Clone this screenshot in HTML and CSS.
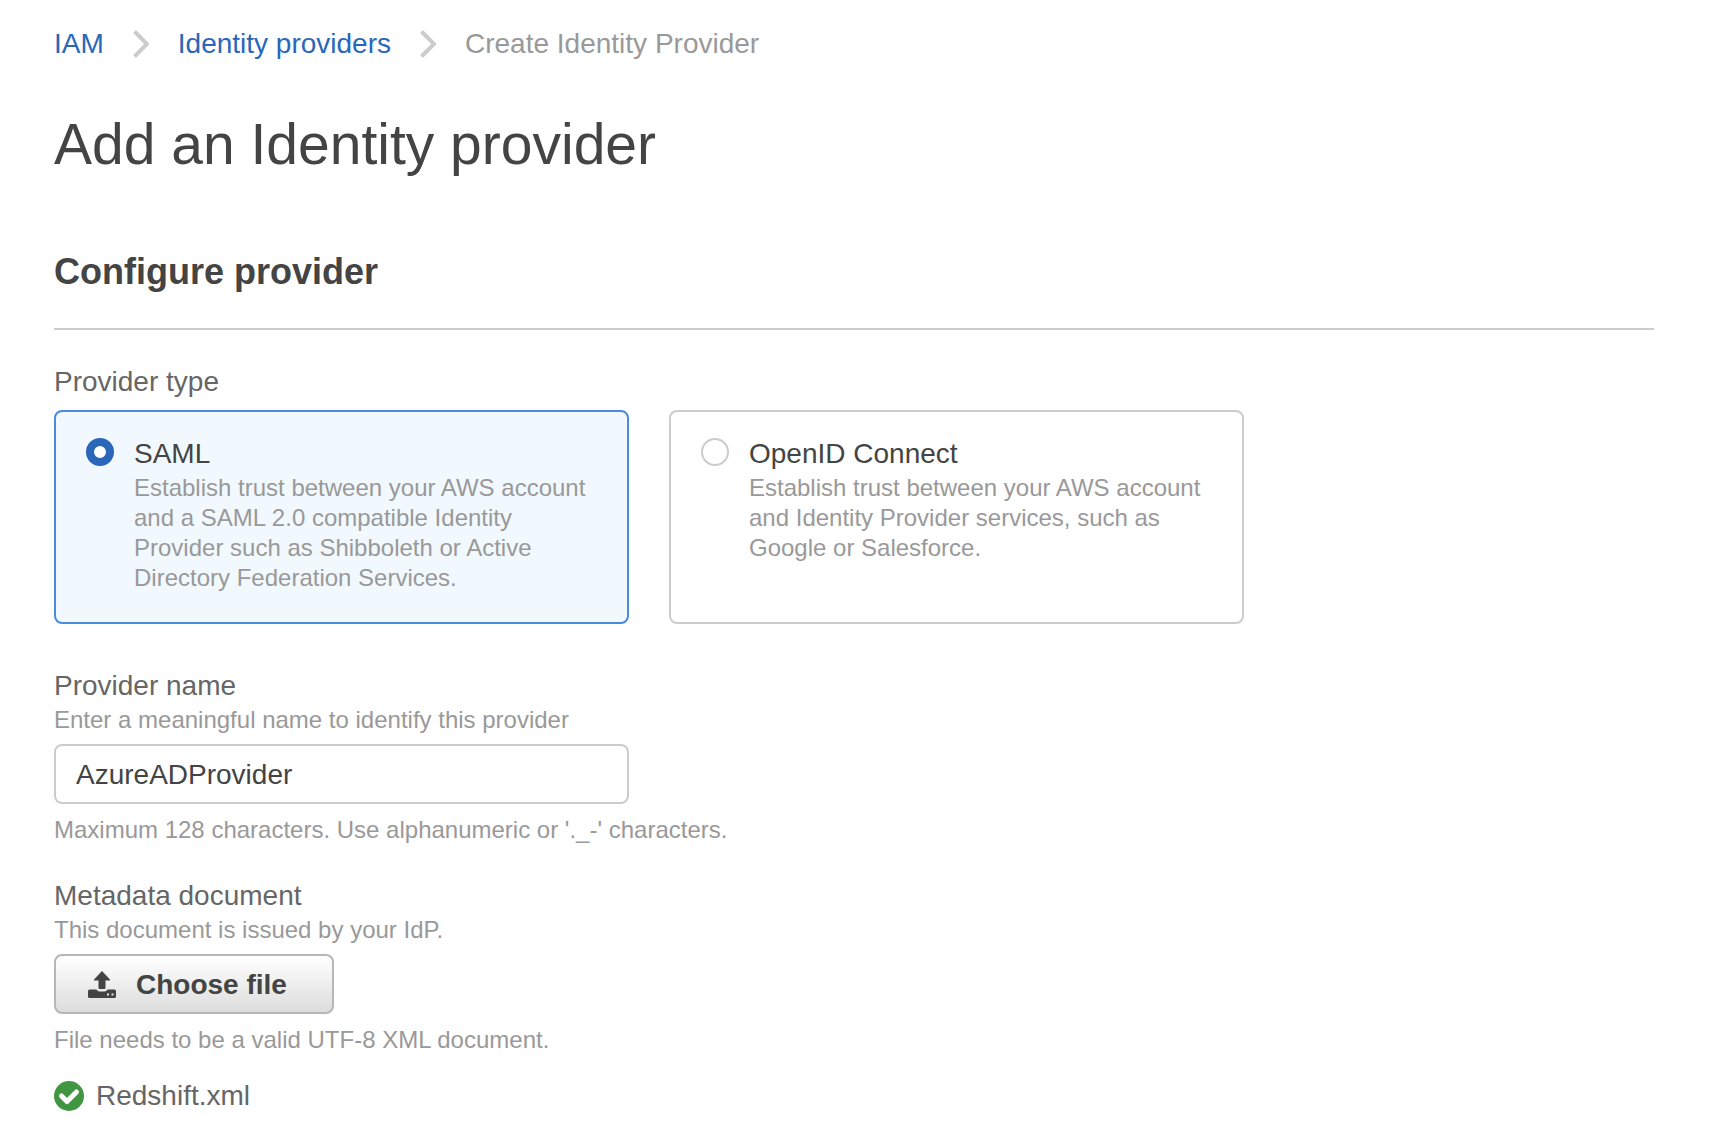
FILE: index.html
```html
<!DOCTYPE html>
<html lang="en">
<head>
  <meta charset="UTF-8" />
  <meta name="viewport" content="width=device-width, initial-scale=1.0"/>
  <title>Create Identity Provider - IAM</title>
  <link rel="stylesheet" href="styles.css">
</head>
<body>
  <nav class="breadcrumb" aria-label="Breadcrumb">
    <a href="#">IAM</a>
    <svg class="chevron" viewBox="0 0 16 28" aria-hidden="true"><path d="M1.5 1.5 14 14 1.5 26.5"/></svg>
    <a href="#">Identity providers</a>
    <svg class="chevron" viewBox="0 0 16 28" aria-hidden="true"><path d="M1.5 1.5 14 14 1.5 26.5"/></svg>
    <span>Create Identity Provider</span>
  </nav>

  <main>
    <h1>Add an Identity provider</h1>
    <h2>Configure provider</h2>

    <form>
      <fieldset class="field">
        <legend class="label">Provider type</legend>
        <div class="cards">
          <label class="card selected">
            <input type="radio" name="type" value="saml" checked />
            <span class="card-text">
              <span class="card-title">SAML</span>
              <span class="hint">Establish trust between your AWS account and a SAML 2.0 compatible Identity Provider such as Shibboleth or Active Directory Federation Services.</span>
            </span>
          </label>
          <label class="card">
            <input type="radio" name="type" value="oidc" />
            <span class="card-text">
              <span class="card-title">OpenID Connect</span>
              <span class="hint">Establish trust between your AWS account and Identity Provider services, such as Google or Salesforce.</span>
            </span>
          </label>
        </div>
      </fieldset>

      <div class="field">
        <label class="label" for="provider-name">Provider name</label>
        <div class="hint">Enter a meaningful name to identify this provider</div>
        <input type="text" class="text-input" id="provider-name" value="AzureADProvider" maxlength="128" spellcheck="false" />
        <div class="hint">Maximum 128 characters. Use alphanumeric or '._-' characters.</div>
      </div>

      <div class="field">
        <label class="label" for="choose-file">Metadata document</label>
        <div class="hint">This document is issued by your IdP.</div>
        <button type="button" class="file-button" id="choose-file">
          <svg class="upload-icon" viewBox="0 0 28 28" aria-hidden="true">
            <path d="M14 0 22 8.500Q22.700 9.500 21.500 9.500H17.500V17Q17.500 18 16.500 18H11.500Q10.500 18 10.500 17V9.500H6.500Q5.300 9.500 6 8.500Z"/>
            <path fill-rule="evenodd" d="M1.500 18.500H8.500Q9.500 20.500 11.500 20.500H16.500Q18.500 20.500 19.500 18.500H26.500Q28 18.500 28 20V25.500Q28 27 26.500 27H1.500Q0 27 0 25.500V20Q0 18.500 1.500 18.500ZM19 22.500V24.500H21V22.500ZM23.500 22.500V24.500H25.500V22.500Z"/>
          </svg>
          Choose file
        </button>
        <div class="hint">File needs to be a valid UTF-8 XML document.</div>
        <div class="file">
          <svg class="check-icon" viewBox="0 0 30 30" aria-hidden="true"><circle cx="15" cy="15" r="15"/><path d="M7.500 15 13 20.500 22.500 11"/></svg>
          <span>Redshift.xml</span>
        </div>
      </div>
    </form>
  </main>
</body>
</html>
```
FILE: styles.css
```css
* {
  box-sizing: border-box;
}
body {
  font-family: "Helvetica Neue", "Liberation Sans", Arial, sans-serif;
  font-size: 28px;
  line-height: 38px;
  background: #fff;
  color: #444;
  margin: 0;
  padding: 25px 82px 24px 54px;
}
.breadcrumb {
  display: flex;
  align-items: center;
  gap: 29px;
  color: #999;
}
.breadcrumb a {
  color: #2a67b9;
  text-decoration: none;
}
.chevron {
  width: 16px;
  height: 28px;
  fill: none;
  stroke: #ccc;
  stroke-width: 4;
}
h1 {
  font-size: 57px;
  line-height: 64px;
  font-weight: normal;
  margin: 49px 0 72px;
}
h2 {
  font-size: 36px;
  line-height: 48px;
  margin: 0 0 33px;
  padding-bottom: 32px;
  border-bottom: 2px solid #ccc;
}
.field {
  border: none;
  margin: 0 0 32px;
  padding: 0;
}
fieldset.field {
  margin-bottom: 43px;
}
.label {
  display: block;
  padding: 0;
  color: #666;
}
.hint {
  display: block;
  font-size: 24px;
  line-height: 30px;
  color: #999;
}

/* provider type cards */
.cards {
  display: grid;
  grid-template-columns: 1fr 1fr;
  gap: 40px;
  max-width: 1190px;
  margin-top: 9px;
}
.card {
  display: flex;
  align-items: flex-start;
  gap: 20px;
  padding: 23px 30px 29px;
  border: 2px solid #ccc;
  border-radius: 8px;
}
.card.selected {
  background: #f1f8fe;
  border-color: #4a8bdb;
}
.card-text {
  flex: 1;
}
.card-title {
  display: block;
}
input[type="radio"] {
  appearance: none;
  width: 28px;
  height: 28px;
  margin: 3px 0 0;
  background: #fff;
  border: 2px solid #ccc;
  border-radius: 50%;
}
input[type="radio"]:checked {
  border: 8px solid #2a67b9;
}

.text-input {
  display: block;
  width: 100%;
  max-width: 575px;
  height: 60px;
  margin: 9px 0 11px;
  padding: 2px 20px 0;
  font: inherit;
  color: #444;
  background: #fff;
  border: 2px solid #ccc;
  border-radius: 8px;
}
.file-button {
  display: flex;
  align-items: center;
  gap: 20px;
  min-width: 280px;
  height: 60px;
  margin: 9px 0 11px;
  padding: 2px 40px 0 32px;
  font: inherit;
  font-weight: bold;
  color: #444;
  background: linear-gradient(#fff, #ddd);
  border: 2px solid #b7b7b7;
  border-radius: 8px;
  cursor: pointer;
}
.upload-icon {
  width: 28px;
  height: 28px;
  fill: #444;
}
.file {
  display: flex;
  align-items: center;
  gap: 12px;
  margin-top: 22px;
  color: #666;
}
.check-icon {
  width: 30px;
  height: 30px;
  fill: #419641;
}
.check-icon path {
  fill: none;
  stroke: #fff;
  stroke-width: 5;
  stroke-linecap: round;
  stroke-linejoin: round;
}
```
